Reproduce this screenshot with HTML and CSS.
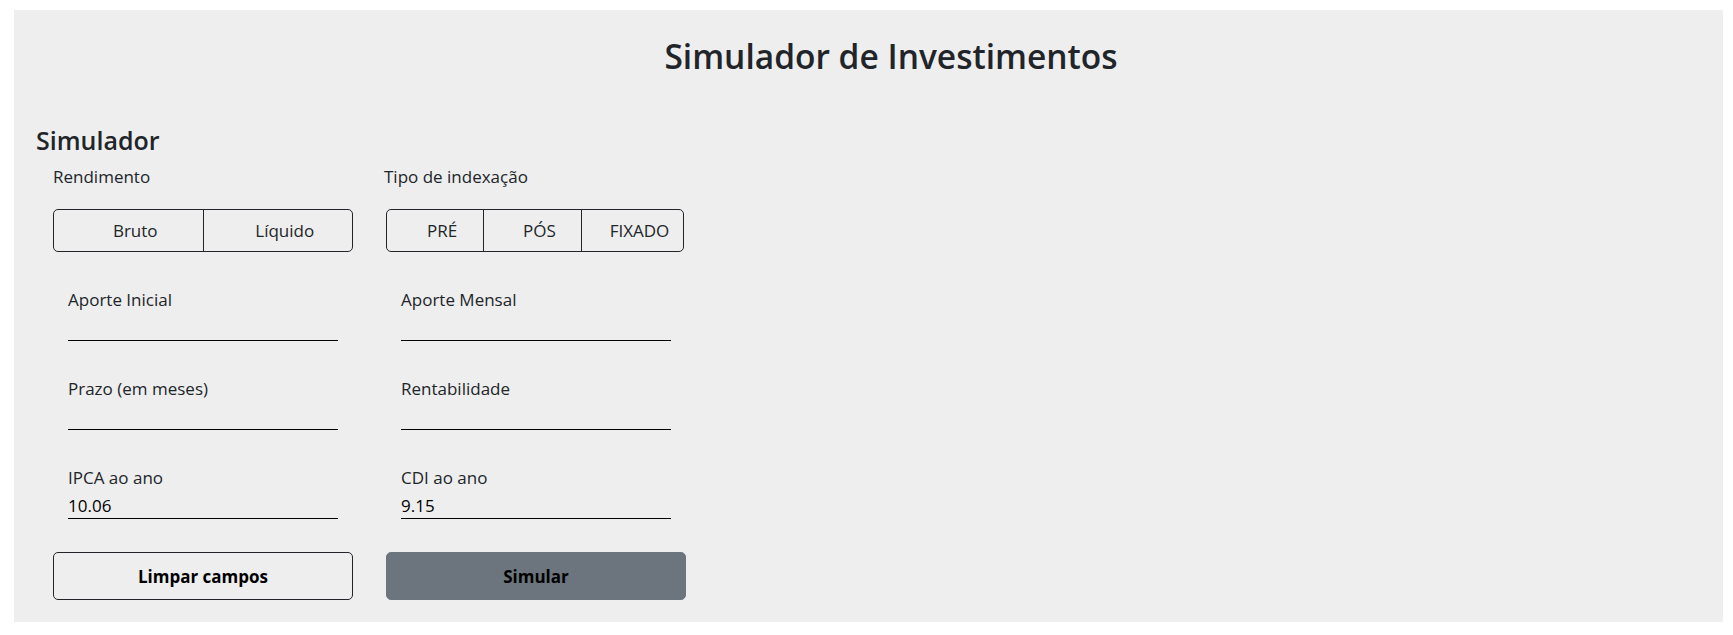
FILE: index.html
```html
<!DOCTYPE html>
<html lang="pt-BR">
<head>
<meta charset="utf-8">
<title>Simulador de Investimentos</title>
<link rel="stylesheet" href="styles.css">
</head>
<body>
<main class="page">
  <h1 class="page-title">Simulador de Investimentos</h1>
  <section class="simulator">
    <h2 class="section-title">Simulador</h2>
    <div class="form-grid">
      <div class="group-label">Rendimento</div>
      <div class="group-label group-label-alt">Tipo de indexação</div>

      <div class="segment segment-two">
        <button class="segment-btn" type="button">Bruto</button>
        <button class="segment-btn" type="button">Líquido</button>
      </div>
      <div class="segment segment-three">
        <button class="segment-btn seg-pre" type="button">PRÉ</button>
        <button class="segment-btn seg-pos" type="button">PÓS</button>
        <button class="segment-btn seg-fix" type="button">FIXADO</button>
      </div>

      <label class="field">
        <span class="field-label">Aporte Inicial</span>
        <input class="field-input" type="text" value="">
      </label>
      <label class="field">
        <span class="field-label">Aporte Mensal</span>
        <input class="field-input" type="text" value="">
      </label>

      <label class="field">
        <span class="field-label">Prazo (em meses)</span>
        <input class="field-input" type="text" value="">
      </label>
      <label class="field">
        <span class="field-label">Rentabilidade</span>
        <input class="field-input" type="text" value="">
      </label>

      <label class="field">
        <span class="field-label">IPCA ao ano</span>
        <input class="field-input" type="text" value="10.06">
      </label>
      <label class="field">
        <span class="field-label">CDI ao ano</span>
        <input class="field-input" type="text" value="9.15">
      </label>

      <button class="action action-outline" type="button">Limpar campos</button>
      <button class="action action-solid" type="button">Simular</button>
    </div>
  </section>
</main>
</body>
</html>
```
FILE: styles.css
```css
* {
  box-sizing: border-box;
}

html, body {
  margin: 0;
  padding: 0;
  background: #ffffff;
}

body {
  font-family: "Open Sans", "Noto Sans", sans-serif;
  color: #212529;
  padding: 10px 10px 13px 14px;
}

.page {
  background: #eeeeee;
  height: 612px;
  padding: 25px 22px 22px 22px;
}

.page-title {
  margin: 0;
  font-size: 33.5px;
  line-height: 42px;
  font-weight: 600;
  text-align: center;
  padding-left: 45px;
  color: #212529;
}

.simulator {
  margin-top: 48px;
}

.section-title {
  margin: 0;
  font-size: 25px;
  line-height: 30px;
  font-weight: 600;
  color: #212529;
}

.form-grid {
  display: grid;
  grid-template-columns: 300px 300px;
  column-gap: 33px;
  margin-top: 10px;
  padding-left: 17px;
  align-items: start;
}

.group-label {
  font-size: 17px;
  line-height: 24px;
}

.group-label-alt {
  margin-left: -2px;
}

.segment {
  display: flex;
  margin-top: 20px;
  height: 43px;
  border: 1px solid #212529;
  border-radius: 5px;
  overflow: hidden;
}

.segment-three {
  width: 298px;
}

.segment-btn {
  flex: 1 1 0;
  margin: 0;
  background: transparent;
  border: 0;
  border-left: 1px solid #212529;
  font-family: inherit;
  font-size: 17px;
  color: #212529;
  text-align: center;
  padding: 0 0 0 14px;
  cursor: pointer;
}

.segment-btn:first-child {
  border-left: 0;
}

.seg-pre {
  flex: 0 0 96px;
}

.seg-pos {
  flex: 0 0 98px;
}

.seg-fix {
  flex: 1 1 0;
}

.field {
  display: flex;
  flex-direction: column;
  margin: 36px 0 0 15px;
  width: 270px;
}

.field-label {
  font-size: 17px;
  line-height: 24px;
}

.field-input {
  display: block;
  width: 100%;
  height: 29px;
  margin: 0;
  padding: 2px 0 0 0;
  background: transparent;
  border: 0;
  border-bottom: 1px solid #000000;
  border-radius: 0;
  font-family: inherit;
  font-size: 17px;
  line-height: 24px;
  color: #000000;
  outline: none;
}

.action {
  margin-top: 33px;
  height: 48px;
  border-radius: 5px;
  font-family: inherit;
  font-size: 17px;
  font-weight: 700;
  color: #000000;
  cursor: pointer;
}

.action-outline {
  background: transparent;
  border: 1px solid #212529;
}

.action-solid {
  background: #6c757d;
  border: 1px solid #6c757d;
}
```
